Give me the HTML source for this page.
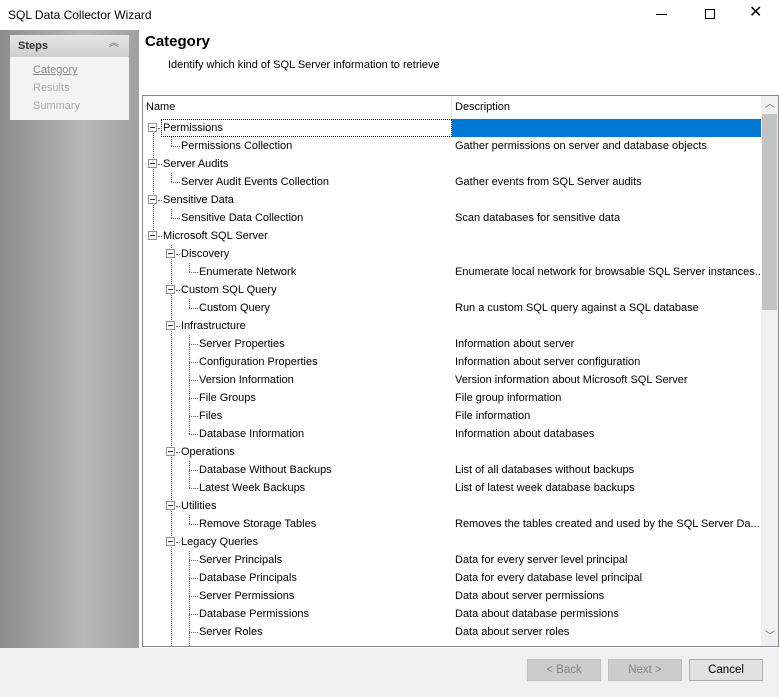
<!DOCTYPE html>
<html><head><style>
*{margin:0;padding:0;box-sizing:border-box}
body{width:779px;height:697px;position:relative;background:#fff;font-family:"Liberation Sans",sans-serif;font-size:11px;color:#000;overflow:hidden}
.a{position:absolute}
.t{position:absolute;white-space:nowrap;line-height:18px}
.h{position:absolute;height:1px;border-top:1px dotted #666}
.v{position:absolute;width:1px;border-left:1px dotted #666}
.bx{position:absolute;width:9px;height:9px;border:1px solid #919191;background:#fff}
.bx:after{content:"";position:absolute;left:1px;top:3px;width:5px;height:1px;background:#333}
.btn{position:absolute;top:659px;height:22px;width:74px;border:1px solid #bfbfbf;background:#ccc;color:#838383;text-align:center;line-height:20px;font-size:11.5px}
.sb{z-index:2}
</style></head><body>
<div class="t" style="left:8px;top:6px;font-size:12px">SQL Data Collector Wizard</div>
<div class="a" style="left:656px;top:14px;width:11px;height:1px;background:#000"></div>
<div class="a" style="left:705px;top:9px;width:10px;height:10px;border:1px solid #000"></div>
<div class="t" style="left:749px;top:4px;font-size:16px">✕</div>
<div class="a" style="left:0;top:30px;width:139px;height:618px;background:linear-gradient(90deg,#8c8c8c,#b8b8b8 60%,#a0a0a0)"></div>
<div class="a" style="left:10px;top:35px;width:119px;height:85px;background:#f3f3f3"></div>
<div class="a" style="left:10px;top:35px;width:119px;height:22px;background:linear-gradient(#e4e4e4,#cfcfcf)"></div>
<div class="t" style="left:18px;top:37px;font-weight:bold;color:#333">Steps</div>
<div class="t" style="left:109px;top:35px;color:#666;font-size:10px">︽</div>
<div class="t" style="left:33px;top:61px;color:#888;text-decoration:underline">Category</div>
<div class="t" style="left:33px;top:79px;color:#aaa">Results</div>
<div class="t" style="left:33px;top:97px;color:#aaa">Summary</div>
<div class="t" style="left:145px;top:33px;font-size:15px;font-weight:bold">Category</div>
<div class="t" style="left:168px;top:56px">Identify which kind of SQL Server information to retrieve</div>
<div class="a" style="left:142px;top:95px;width:637px;height:552px;border:1px solid #828790;background:#fff"></div>
<div class="t" style="left:146px;top:98px">Name</div>
<div class="a" style="left:451px;top:96px;width:1px;height:22px;background:#e5e5e5"></div>
<div class="t" style="left:455px;top:98px">Description</div>
<div class="a sb" style="left:761px;top:96px;width:17px;height:550px;background:#f0f0f0"></div>
<div class="a sb" style="left:762px;top:114px;width:15px;height:196px;background:#c2c2c2"></div>
<div class="t sb" style="left:765px;top:96px;font-size:10px;color:#606060">︿</div>
<div class="t sb" style="left:765px;top:628px;font-size:10px;color:#606060">﹀</div>
<div class="a" style="left:452px;top:119px;width:309px;height:18px;background:#0078d7"></div>
<div class="a" style="left:161px;top:119px;width:291px;height:18px;border:1px dotted #000"></div>
<div class="v" style="left:153px;top:133px;height:103px"></div>
<div class="v" style="left:171px;top:137px;height:9px"></div>
<div class="v" style="left:171px;top:173px;height:9px"></div>
<div class="v" style="left:171px;top:209px;height:9px"></div>
<div class="v" style="left:171px;top:245px;height:401px"></div>
<div class="v" style="left:189px;top:263px;height:9px"></div>
<div class="v" style="left:189px;top:299px;height:9px"></div>
<div class="v" style="left:189px;top:335px;height:99px"></div>
<div class="v" style="left:189px;top:461px;height:27px"></div>
<div class="v" style="left:189px;top:515px;height:9px"></div>
<div class="v" style="left:189px;top:551px;height:95px"></div>
<div id="rows"></div>
<div class="a" style="left:0;top:648px;width:779px;height:49px;background:#f0f0f0;z-index:3"></div>
<div class="btn" style="left:527px;z-index:4">&lt; Back</div>
<div class="btn" style="left:608px;z-index:4">Next &gt;</div>
<div class="btn" style="left:689px;background:#e1e1e1;border-color:#adadad;color:#000;z-index:4">Cancel</div>
<script>
var R=[[0,1,"Permissions",""],[1,0,"Permissions Collection","Gather permissions on server and database objects"],
[0,1,"Server Audits",""],[1,0,"Server Audit Events Collection","Gather events from SQL Server audits"],
[0,1,"Sensitive Data",""],[1,0,"Sensitive Data Collection","Scan databases for sensitive data"],
[0,1,"Microsoft SQL Server",""],[1,1,"Discovery",""],[2,0,"Enumerate Network","Enumerate local network for browsable SQL Server instances..."],
[1,1,"Custom SQL Query",""],[2,0,"Custom Query","Run a custom SQL query against a SQL database"],
[1,1,"Infrastructure",""],[2,0,"Server Properties","Information about server"],[2,0,"Configuration Properties","Information about server configuration"],
[2,0,"Version Information","Version information about Microsoft SQL Server"],[2,0,"File Groups","File group information"],[2,0,"Files","File information"],
[2,0,"Database Information","Information about databases"],[1,1,"Operations",""],[2,0,"Database Without Backups","List of all databases without backups"],
[2,0,"Latest Week Backups","List of latest week database backups"],[1,1,"Utilities",""],[2,0,"Remove Storage Tables","Removes the tables created and used by the SQL Server Da..."],
[1,1,"Legacy Queries",""],[2,0,"Server Principals","Data for every server level principal"],[2,0,"Database Principals","Data for every database level principal"],
[2,0,"Server Permissions","Data about server permissions"],[2,0,"Database Permissions","Data about database permissions"],[2,0,"Server Roles","Data about server roles"]];
var h="";R.forEach(function(r,i){var y=119+i*18,L=r[0],tx=163+L*18,cx=153+L*18;
if(r[1]){h+='<div class="bx" style="left:'+(cx-5)+'px;top:'+(y+4)+'px"></div><div class="h" style="left:'+(cx+5)+'px;top:'+(y+9)+'px;width:'+(tx-cx-6)+'px"></div>';}
else{h+='<div class="h" style="left:'+(cx)+'px;top:'+(y+9)+'px;width:'+(tx-cx-1)+'px"></div>';}
h+='<div class="t" style="left:'+tx+'px;top:'+y+'px">'+r[2]+'</div>';
if(r[3])h+='<div class="t" style="left:455px;top:'+y+'px">'+r[3]+'</div>';});
document.getElementById("rows").innerHTML=h;
</script>
</body></html>
